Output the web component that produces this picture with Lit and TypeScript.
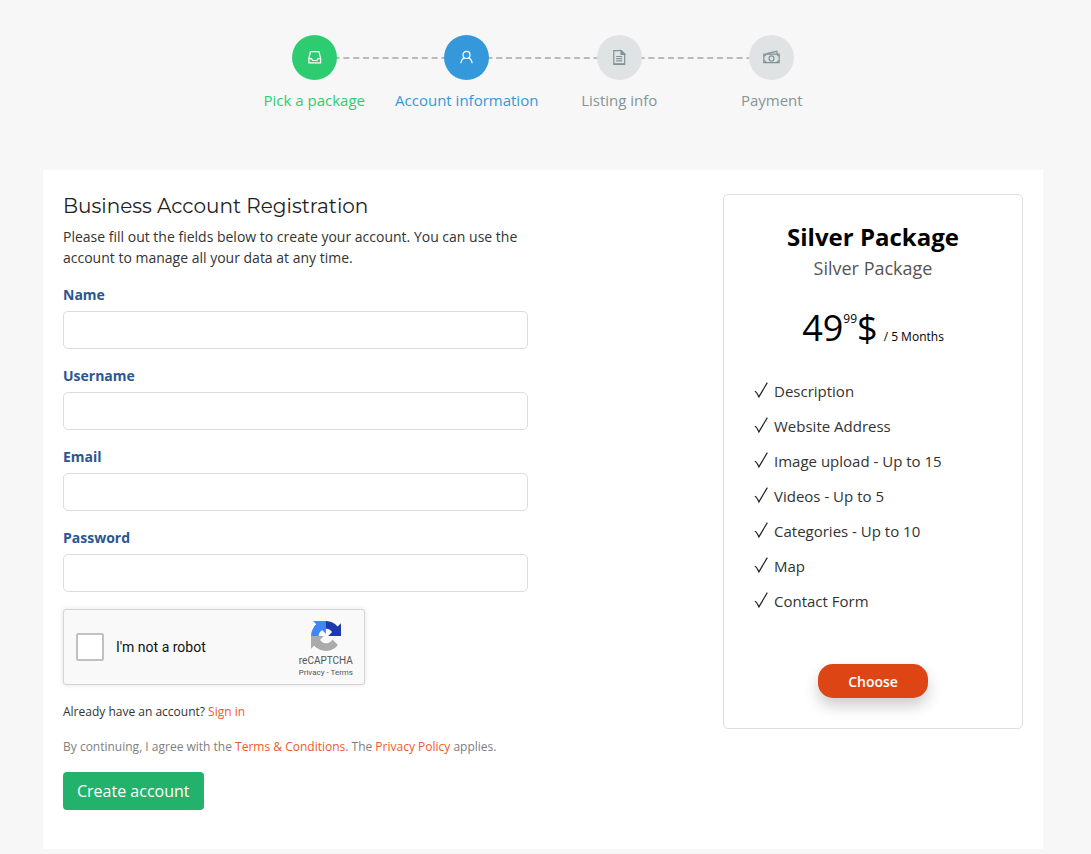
import { LitElement, html, css, svg } from "lit";
import { customElement, property } from "lit/decorators.js";

interface Step {
  label: string;
  state: string;
  icon: unknown;
}

const steps: Step[] = [
  {
    label: "Pick a package",
    state: "done",
    icon: svg`<path d="M4.500 2.600h8.500l1.600 6.800v4.400H2.900V9.400z"/><path d="M2.900 9.600h2.700l1 1.900h4.300l1-1.900h2.700"/>`,
  },
  {
    label: "Account information",
    state: "current",
    icon: svg`<circle cx="8.500" cy="5.900" r="3.500"/><path d="M2.900 14.300c.2-3 1.600-4.700 3.700-5.700M14.100 14.300c-.2-3-1.600-4.700-3.700-5.700"/>`,
  },
  {
    label: "Listing info",
    state: "",
    icon: svg`<path d="M2.800 1.600h7.400l3.500 3.500v10.300H2.800z"/><path d="M10 1.600v3.700h3.700z" fill="currentColor"/><path d="M5.200 7.500h6M5.200 9.700h6M5.200 11.900h6M2.800 14.900h10.900"/>`,
  },
  {
    label: "Payment",
    state: "",
    icon: svg`<path d="M.8 5.100h15.400v8.600H.8zM3.500 4.500l10.300-2.200.4 2"/><ellipse cx="8.500" cy="9.400" rx="2.400" ry="2.600"/><path d="M1.200 7.300l2.100-1.900M15.800 7.300l-2.100-1.900M1.200 11.500l2.100 1.900M15.800 11.500l-2.100 1.900"/>`,
  },
];

const fields = [
  { id: "name", label: "Name", type: "text" },
  { id: "username", label: "Username", type: "text" },
  { id: "email", label: "Email", type: "email" },
  { id: "password", label: "Password", type: "password" },
];

const features = [
  "Description",
  "Website Address",
  "Image upload - Up to 15",
  "Videos - Up to 5",
  "Categories - Up to 10",
  "Map",
  "Contact Form",
];

@customElement("progress-steps")
export class ProgressSteps extends LitElement {
  static styles = css`
    :host { display: block; }
    .steps {
      display: grid;
      grid-template-columns: repeat(4, 1fr);
      max-width: 610px;
      margin: 0 auto;
      padding: 0;
      list-style: none;
    }
    .step {
      display: grid;
      justify-items: center;
      row-gap: 9px;
      color: #849599;
      font-size: 15px;
      line-height: 22px;
      white-space: nowrap;
    }
    .dot {
      grid-area: 1 / 1;
      z-index: 1;
      display: grid;
      place-items: center;
      width: 45px;
      height: 45px;
      border-radius: 50%;
      background: #dfe3e4;
      color: #7f9296;
    }
    .line {
      grid-area: 1 / 1;
      place-self: center stretch;
      margin: 0 -50% 0 50%;
      border-top: 2px dashed #bababa;
    }
    .icon { width: 17px; height: 17px; fill: none; stroke: currentColor; stroke-width: 1.2; }
    .done { color: #2ecc71; }
    .done .dot { background: #2ecc71; color: #fff; }
    .current { color: #3498db; }
    .current .dot { background: #3498db; color: #fff; }
  `;
  render() {
    return html`<ol class="steps">
      ${steps.map(
        (s, i) => html`<li class="step ${s.state}">
          ${i < steps.length - 1 ? html`<span class="line"></span>` : ""}
          <span class="dot"><svg class="icon" viewBox="0 0 17 17" aria-hidden="true">${s.icon}</svg></span>
          <span>${s.label}</span>
        </li>`
      )}
    </ol>`;
  }
}

@customElement("captcha-box")
export class CaptchaBox extends LitElement {
  static styles = css`
    :host { display: block; }
    .box {
      box-sizing: border-box;
      display: flex;
      align-items: center;
      max-width: 302px;
      height: 76px;
      padding: 0 11px 0 12px;
      border: 1px solid #d3d3d3;
      border-radius: 3px;
      background: #f9f9f9;
      box-shadow: 0 0 4px 1px rgba(0, 0, 0, 0.08);
      font-family: Roboto, sans-serif;
    }
    .tick {
      appearance: none;
      width: 28px;
      height: 28px;
      margin: 0 12px 0 0;
      border: 2px solid #c1c1c1;
      border-radius: 2px;
      background: #fff;
    }
    .tick:checked { background: #4a90e2; }
    .label { flex: 1; font-size: 14px; color: #111; }
    .brand { display: flex; flex-direction: column; align-items: center; color: #555; padding-top: 6px; }
    .logo { width: 30px; height: 30px; }
    .word { font-size: 10px; line-height: 12px; margin-top: 4px; }
    .links { font-size: 8px; line-height: 12px; }
    .links a { color: #555; text-decoration: none; }
  `;
  render() {
    return html`<div class="box">
      <input class="tick" type="checkbox" id="robot" />
      <label class="label" for="robot">I'm not a robot</label>
      <div class="brand">
        <svg class="logo" viewBox="0 0 64 64" aria-hidden="true">
          <path fill="#1c3aa9" d="M64 31.955l-.033-1.370V4.687l-7.160 7.160C50.948 4.674 42.033.093 32.050.093c-10.400 0-19.622 4.960-25.458 12.640l11.736 11.860a15.550 15.550 0 0 1 4.754-5.334c2.050-1.600 4.952-2.906 8.968-2.906.485 0 .860.057 1.135.163 4.976.393 9.288 3.140 11.828 7.124l-8.307 8.307L64 31.953"/>
          <path fill="#4285f4" d="M31.862.094l-1.370.033H4.594l7.160 7.160C4.580 13.147 0 22.060 0 32.046c0 10.400 4.960 19.622 12.640 25.458L24.500 45.768a15.550 15.550 0 0 1-5.334-4.754c-1.600-2.050-2.906-4.952-2.906-8.968 0-.485.057-.860.163-1.135.393-4.976 3.140-9.288 7.124-11.828l8.307 8.307L31.860.095"/>
          <path fill="#ababab" d="M0 32.045l.033 1.370v25.898l7.160-7.160c5.860 7.173 14.774 11.754 24.760 11.754 10.400 0 19.622-4.960 25.458-12.640l-11.736-11.860a15.550 15.550 0 0 1-4.754 5.334c-2.050 1.600-4.952 2.906-8.968 2.906-.485 0-.860-.057-1.135-.163-4.976-.393-9.288-3.140-11.828-7.124l8.307-8.307c-10.522.040-22.400.066-27.295-.005"/>
        </svg>
        <span class="word">reCAPTCHA</span>
        <span class="links"><a href="#">Privacy</a> - <a href="#">Terms</a></span>
      </div>
    </div>`;
  }
}

@customElement("package-card")
export class PackageCard extends LitElement {
  @property() name = "";
  static styles = css`
    :host { display: block; }
    .card {
      box-sizing: border-box;
      display: flex;
      flex-direction: column;
      align-items: center;
      padding: 25px 30px 30px;
      border: 1px solid #dfdfdf;
      border-radius: 5px;
      color: #000;
    }
    .name { margin: 0; font-size: 24px; line-height: 34px; font-weight: 700; }
    .sub { margin: 0; font-size: 18px; line-height: 28px; color: #555; }
    .price { margin: 18px 0 0; display: flex; align-items: baseline; font-size: 36px; line-height: 56px; }
    .cents { align-self: flex-start; font-size: 12px; line-height: 38px; }
    .term { font-size: 12px; margin-left: 6px; }
    .features { align-self: stretch; margin: 9px 0 0; padding: 0; list-style: none; }
    .feature { display: flex; align-items: center; gap: 6px; font-size: 15px; line-height: 35px; color: #333; }
    .check { width: 14px; height: 18px; margin-bottom: 4px; fill: none; stroke: #222; stroke-width: 1.2; }
    .choose {
      margin-top: 45px;
      height: 34px;
      padding: 0 30px;
      border: 0;
      border-radius: 15px;
      background: #dd4614;
      color: #fff;
      font: 600 14px "Open Sans", sans-serif;
      box-shadow: 0 8px 15px rgba(0, 0, 0, 0.2);
    }
  `;
  render() {
    return html`<section class="card">
      <h2 class="name">${this.name}</h2>
      <p class="sub">${this.name}</p>
      <p class="price"><span>49</span><span class="cents">99</span><span>$</span><span class="term">/ 5 Months</span></p>
      <ul class="features">
        ${features.map(
          (f) => html`<li class="feature">
            <svg class="check" viewBox="0 0 14 18" aria-hidden="true"><path d="M.8 10.300c1.200.4 2.600 2.400 4.100 5.600L13.300 1.600"/></svg>
            <span>${f}</span>
          </li>`
        )}
      </ul>
      <button class="choose" type="button">Choose</button>
    </section>`;
  }
}

@customElement("app-root")
export class AppRoot extends LitElement {
  static styles = css`
    :host {
      display: block;
      box-sizing: border-box;
      min-height: 100vh;
      padding: 35px 5px 5px 0;
      background: #f7f7f7;
      color: #333;
      font-family: "Open Sans", sans-serif;
      font-size: 14px;
      line-height: 21px;
    }
    .panel {
      box-sizing: border-box;
      display: flex;
      flex-wrap: wrap;
      justify-content: space-between;
      align-items: flex-start;
      gap: 20px;
      max-width: 1000px;
      margin: 59px auto 0;
      padding: 24px 20px 39px;
      background: #fff;
    }
    .form { flex: 0 1 465px; min-width: 0; }
    .package { flex: 0 1 300px; }
    .title { margin: 0; font: 400 20px/24px Montserrat, Inter, sans-serif; color: #222; }
    .intro { margin: 8px 0 16px; }
    .field { display: flex; flex-direction: column; gap: 6px; margin-bottom: 16px; }
    .label { font-weight: 700; color: #2b5690; }
    .input {
      box-sizing: border-box;
      width: 100%;
      height: 38px;
      padding: 0 12px;
      border: 1px solid #dcdcdf;
      border-radius: 5px;
      font: inherit;
    }
    .captcha { padding: 1px 0; }
    .note { margin: 16px 0 0; font-size: 12px; line-height: 19px; }
    .muted { color: #808080; }
    .note a { color: #f1592a; text-decoration: none; }
    .submit {
      height: 38px;
      margin-top: 16px;
      padding: 0 14px;
      border: 0;
      border-radius: 4px;
      background: #22b26b;
      color: #fff;
      font: 400 16px "Open Sans", sans-serif;
    }
  `;
  render() {
    return html`
      <progress-steps></progress-steps>
      <main class="panel">
        <form class="form">
          <h1 class="title">Business Account Registration</h1>
          <p class="intro">
            Please fill out the fields below to create your account. You can use the account to manage all your data at
            any time.
          </p>
          ${fields.map(
            (f) => html`<div class="field">
              <label class="label" for=${f.id}>${f.label}</label>
              <input class="input" id=${f.id} type=${f.type} />
            </div>`
          )}
          <captcha-box class="captcha"></captcha-box>
          <p class="note">Already have an account? <a href="#">Sign in</a></p>
          <p class="note muted">
            By continuing, I agree with the <a href="#">Terms &amp; Conditions</a>. The
            <a href="#">Privacy Policy</a> applies.
          </p>
          <button class="submit" type="button">Create account</button>
        </form>
        <package-card class="package" name="Silver Package"></package-card>
      </main>
    `;
  }
}
